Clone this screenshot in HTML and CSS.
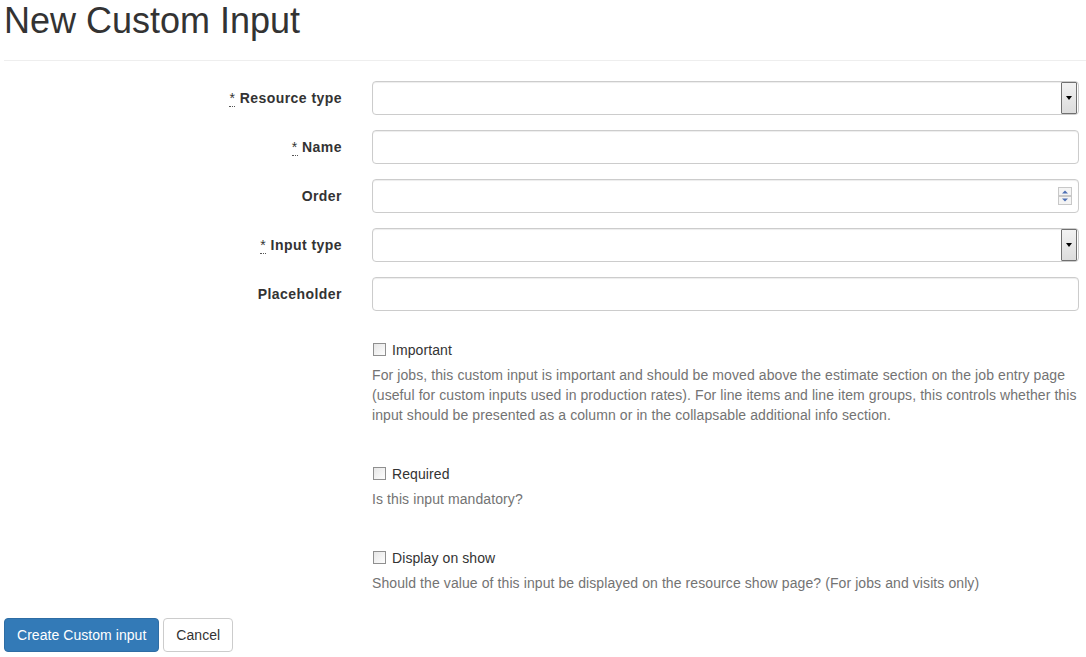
FILE: index.html
```html
<!DOCTYPE html>
<html>
<head>
<meta charset="utf-8">
<link rel="stylesheet" href="styles.css">
</head>
<body>
<div class="page">
  <div class="page-header"><h1>New Custom Input</h1></div>
  <form class="form">
    <div class="form-row">
      <label class="ctl-label"><abbr class="req">*</abbr> Resource type</label>
      <div class="fake-select"><span class="sel-btn"><span class="tri"></span></span></div>
    </div>
    <div class="form-row">
      <label class="ctl-label"><abbr class="req">*</abbr> Name</label>
      <div class="fake-input"></div>
    </div>
    <div class="form-row">
      <label class="ctl-label">Order</label>
      <div class="fake-input number">
        <span class="spin">
          <svg width="14" height="18" viewBox="0 0 14 18">
            <rect x="0.5" y="0.5" width="13" height="8" fill="#f4f4f4" stroke="#c8c8c8"/>
            <rect x="0.5" y="9.5" width="13" height="8" fill="#f4f4f4" stroke="#c8c8c8"/>
            <path d="M4 6.5 L7 3.5 L10 6.5 Z" fill="#4d6fb3"/>
            <path d="M4 11.5 L7 14.5 L10 11.5 Z" fill="#4d6fb3"/>
          </svg>
        </span>
      </div>
    </div>
    <div class="form-row">
      <label class="ctl-label"><abbr class="req">*</abbr> Input type</label>
      <div class="fake-select"><span class="sel-btn"><span class="tri"></span></span></div>
    </div>
    <div class="form-row">
      <label class="ctl-label">Placeholder</label>
      <div class="fake-input"></div>
    </div>

    <div class="form-row check-row first">
      <div></div>
      <div>
        <div class="check"><span class="box"></span><span>Important</span></div>
        <p class="help">For jobs, this custom input is important and should be moved above the estimate section on the job entry page (useful for custom inputs used in production rates). For line items and line item groups, this controls whether this input should be presented as a column or in the collapsable additional info section.</p>
      </div>
    </div>
    <div class="form-row check-row">
      <div></div>
      <div>
        <div class="check"><span class="box"></span><span>Required</span></div>
        <p class="help">Is this input mandatory?</p>
      </div>
    </div>
    <div class="form-row check-row last">
      <div></div>
      <div>
        <div class="check"><span class="box"></span><span>Display on show</span></div>
        <p class="help">Should the value of this input be displayed on the resource show page? (For jobs and visits only)</p>
      </div>
    </div>

    <div class="actions">
      <button type="button" class="btn btn-primary">Create Custom input</button>
      <button type="button" class="btn btn-default">Cancel</button>
    </div>
  </form>
</div>
</body>
</html>
```

FILE: styles.css
```css
* { box-sizing: border-box; }
html, body { margin: 0; padding: 0; background: #fff; }
body {
  font-family: "Liberation Sans", Arial, sans-serif;
  font-size: 14px;
  line-height: 20px;
  color: #333;
  overflow: hidden;
}
.page { padding: 1px 0 0 4px; }
.page-header {
  border-bottom: 1px solid #eee;
  padding-bottom: 19px;
  margin-bottom: 20px;
}
.page-header h1 {
  margin: 0;
  font-size: 36px;
  font-weight: 500;
  line-height: 39.6px;
  color: #333;
}
.form { padding-right: 7px; letter-spacing: 0.09px; }
.form-row {
  display: grid;
  grid-template-columns: 353px 1fr;
  column-gap: 15px;
  margin-bottom: 15px;
}
.ctl-label {
  text-align: right;
  font-weight: bold;
  padding: 7px 15px 0 0;
  line-height: 20px;
  letter-spacing: 0.45px;
}
abbr.req {
  text-decoration: none;
  border-bottom: 1px dotted #555;
  font-weight: normal;
  cursor: help;
}
.fake-input, .fake-select {
  height: 34px;
  border: 1px solid #ccc;
  border-radius: 4px;
  background: #fff;
  box-shadow: inset 0 1px 1px rgba(0,0,0,0.075);
}
.fake-select {
  display: flex;
  justify-content: flex-end;
  padding: 0 1px 0 0;
}
.sel-btn {
  width: 16px;
  height: 32px;
  border: 1px solid #707070;
  border-radius: 1px;
  background: linear-gradient(#f2f2f2, #dcdcdc);
  display: flex;
  align-items: center;
  justify-content: center;
}
.tri {
  width: 0; height: 0;
  border-left: 3.5px solid transparent;
  border-right: 3.5px solid transparent;
  border-top: 4px solid #000;
  margin-top: 1px;
}
.fake-input.number {
  display: flex;
  justify-content: flex-end;
  align-items: center;
  padding-right: 6px;
}
.spin { display: flex; }
.check-row { margin-bottom: 39px; }
.check-row.first { margin-top: 29px; }
.check-row.last { margin-bottom: 25px; }
.check {
  display: flex;
  align-items: center;
  height: 20px;
  padding-left: 1px;
}
.check .box {
  width: 13px;
  height: 13px;
  border: 1px solid #8f8f8f;
  background: linear-gradient(135deg, #e6e6e6, #fdfdfd);
  margin-right: 6px;
}
.help {
  margin: 5px 0 0 0;
  color: #737373;
  line-height: 20px;
}
.actions {
  display: flex;
  gap: 4px;
}
.btn {
  font-family: "Liberation Sans", Arial, sans-serif;
  font-size: 14px;
  line-height: 20px;
  padding: 6px 12px;
  border-radius: 4px;
  border: 1px solid transparent;
  height: 34px;
  cursor: pointer;
  letter-spacing: 0.05px;
}
.btn-primary {
  background: #337ab7;
  border-color: #2e6da4;
  color: #fff;
}
.btn-default {
  background: #fff;
  border-color: #ccc;
  color: #333;
}
```
